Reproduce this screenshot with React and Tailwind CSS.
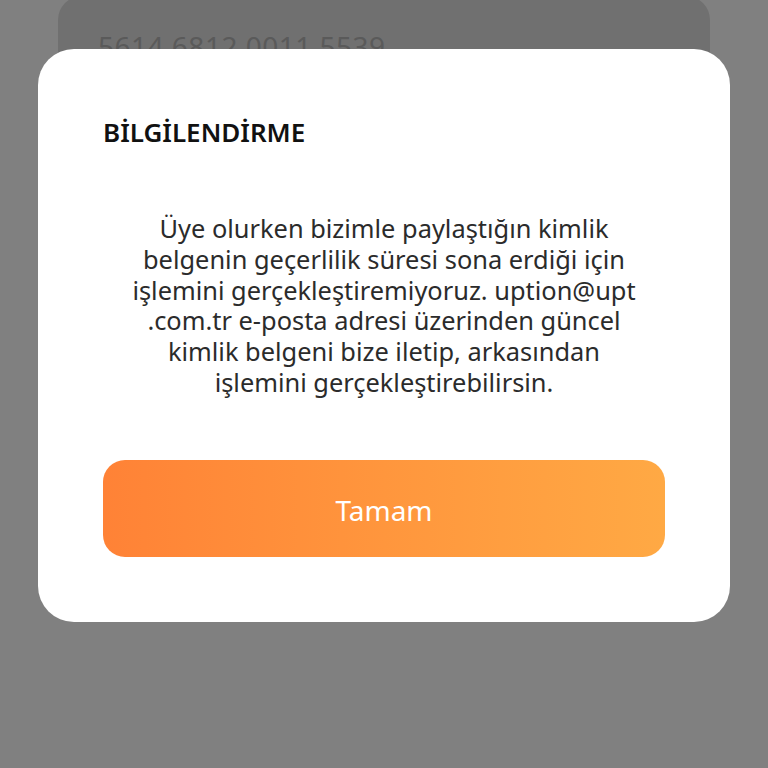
import React from 'react';

const lines = [
  'Üye olurken bizimle paylaştığın kimlik',
  'belgenin geçerlilik süresi sona erdiği için',
  'işlemini gerçekleştiremiyoruz. uption@upt',
  '.com.tr e-posta adresi üzerinden güncel',
  'kimlik belgeni bize iletip, arkasından',
  'işlemini gerçekleştirebilirsin.',
];

const App = () => {
  return (
    <div className="relative h-[768px] w-[768px] overflow-hidden bg-[#808080] font-['Noto_Sans',sans-serif]">
      {/* page behind the dimmed overlay */}
      <div className="mx-[58px] -mt-[4px] h-[110px] rounded-[24px] bg-[#707070] px-[40px] pt-[36px]">
        <p className="text-[28px] leading-none tracking-[0.5px] text-[#5a5a5a]">5614 6812 0011 5539</p>
      </div>

      {/* dialog */}
      <div className="absolute left-[38px] top-[49px] flex h-[573px] w-[692px] flex-col rounded-[36px] bg-white px-[65px] pt-[66px]">
        <h2 className="text-[26px] font-semibold leading-[34px] text-[#111111]">BİLGİLENDİRME</h2>
        <div className="mt-[64px] flex flex-col items-center text-center text-[25.4px] leading-[30.8px] text-[#2b2b2b]">
          {lines.map((l) => (
            <span key={l}>{l}</span>
          ))}
        </div>
        <button className="mt-[62px] h-[97px] w-full rounded-[22px] bg-gradient-to-r from-[#ff8236] to-[#ffa944] pt-[4px] text-[28px] text-white">
          Tamam
        </button>
      </div>
    </div>
  );
};

export default App;
